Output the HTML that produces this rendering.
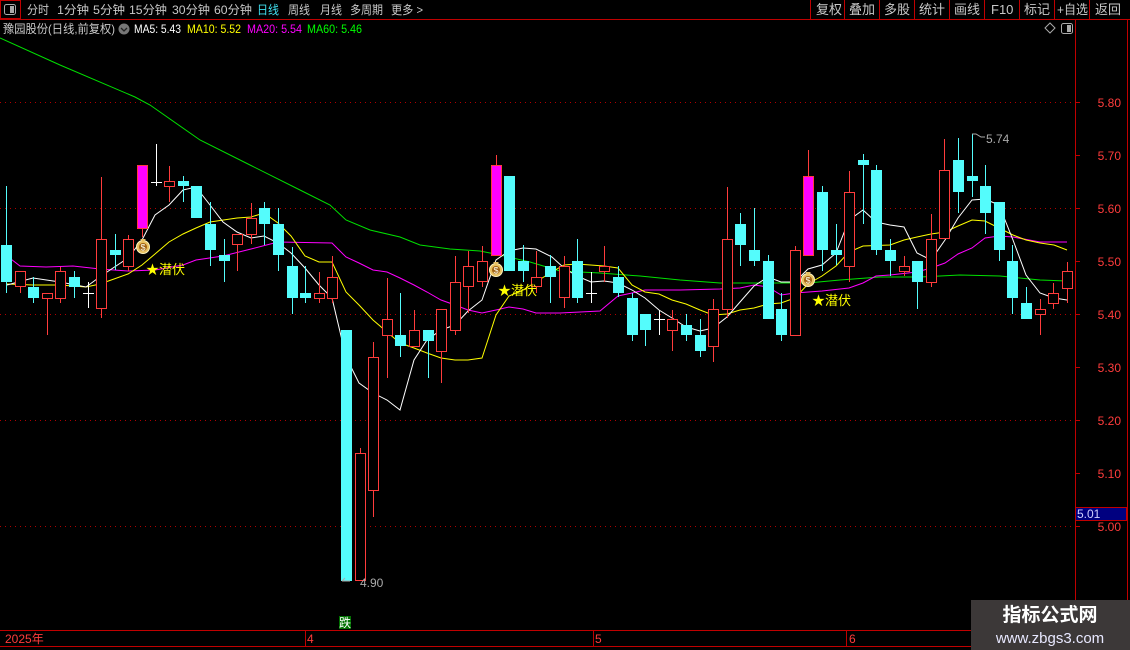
<!DOCTYPE html>
<html><head><meta charset="utf-8"><style>
html,body{margin:0;padding:0;background:#000;width:1130px;height:650px;overflow:hidden}
svg{display:block}
text{font-family:"Liberation Sans","Noto Sans CJK SC",sans-serif}
</style></head><body>
<svg width="1130" height="650" viewBox="0 0 1130 650" xmlns="http://www.w3.org/2000/svg">
<rect width="1130" height="650" fill="#000"/>
<!-- top bar -->
<line x1="0" y1="19.5" x2="1130" y2="19.5" stroke="#c00000"/>
<rect x="0.5" y="0.5" width="20" height="18" fill="none" stroke="#c00000"/>
<rect x="4.5" y="4.5" width="11" height="10" rx="2" fill="none" stroke="#aaa"/>
<rect x="10" y="6" width="4" height="7" fill="#aaa"/>
<g font-size="12" fill="#c8c8c8" lengthAdjust="spacingAndGlyphs">
<text x="27" y="14" textLength="22" lengthAdjust="spacingAndGlyphs">分时</text>
<text x="57" y="14" textLength="32" lengthAdjust="spacingAndGlyphs">1分钟</text>
<text x="93" y="14" textLength="32" lengthAdjust="spacingAndGlyphs">5分钟</text>
<text x="129" y="14" textLength="38" lengthAdjust="spacingAndGlyphs">15分钟</text>
<text x="172" y="14" textLength="38" lengthAdjust="spacingAndGlyphs">30分钟</text>
<text x="214" y="14" textLength="38" lengthAdjust="spacingAndGlyphs">60分钟</text>
<text x="257" y="14" fill="#40e0f0" textLength="22" lengthAdjust="spacingAndGlyphs">日线</text>
<text x="288" y="14" textLength="22" lengthAdjust="spacingAndGlyphs">周线</text>
<text x="320" y="14" textLength="22" lengthAdjust="spacingAndGlyphs">月线</text>
<text x="350" y="14" textLength="33" lengthAdjust="spacingAndGlyphs">多周期</text>
<text x="391" y="14" textLength="32" lengthAdjust="spacingAndGlyphs">更多 &gt;</text>
</g>
<g stroke="#c00000">
<line x1="810.5" y1="0" x2="810.5" y2="19"/><line x1="844.5" y1="0" x2="844.5" y2="19"/><line x1="879.5" y1="0" x2="879.5" y2="19"/>
<line x1="914.5" y1="0" x2="914.5" y2="19"/><line x1="949.5" y1="0" x2="949.5" y2="19"/><line x1="984.5" y1="0" x2="984.5" y2="19"/>
<line x1="1019.5" y1="0" x2="1019.5" y2="19"/><line x1="1054.5" y1="0" x2="1054.5" y2="19"/><line x1="1089.5" y1="0" x2="1089.5" y2="19"/>
</g>
<g font-size="13" fill="#c8c8c8">
<text x="816" y="14">复权</text><text x="849" y="14">叠加</text><text x="884" y="14">多股</text><text x="919" y="14">统计</text>
<text x="954" y="14">画线</text><text x="991" y="14">F10</text><text x="1024" y="14">标记</text><text x="1057" y="14" textLength="31" lengthAdjust="spacingAndGlyphs">+自选</text><text x="1095" y="14">返回</text>
</g>
<!-- info line -->
<g font-size="12">
<text x="3" y="33" fill="#c8c8c8" textLength="112" lengthAdjust="spacingAndGlyphs">豫园股份(日线,前复权)</text>
<circle cx="124" cy="29" r="5.5" fill="#777"/><path d="M121 28l3 3 3-3" stroke="#222" fill="none" stroke-width="1.3"/>
<text x="134" y="33" fill="#fff" textLength="47" lengthAdjust="spacingAndGlyphs">MA5: 5.43</text>
<text x="187" y="33" fill="#ffff00" textLength="54" lengthAdjust="spacingAndGlyphs">MA10: 5.52</text>
<text x="247" y="33" fill="#ff00ff" textLength="55" lengthAdjust="spacingAndGlyphs">MA20: 5.54</text>
<text x="307" y="33" fill="#00ff00" textLength="55" lengthAdjust="spacingAndGlyphs">MA60: 5.46</text>
</g>
<path d="M1045 28l5-5 5 5-5 5z" fill="none" stroke="#aaa"/>
<rect x="1061.5" y="23.5" width="11" height="10" rx="2" fill="none" stroke="#aaa"/><rect x="1067" y="25" width="4" height="7" fill="#aaa"/>
<!-- grid -->
<g stroke="#b00000" stroke-dasharray="1,4">
<line x1="0" y1="102.5" x2="1075" y2="102.5"/><line x1="0" y1="208.5" x2="1075" y2="208.5"/><line x1="0" y1="314.5" x2="1075" y2="314.5"/>
<line x1="0" y1="420.5" x2="1075" y2="420.5"/><line x1="0" y1="526.5" x2="1075" y2="526.5"/>
</g>
<!-- axis -->
<line x1="1075.5" y1="20" x2="1075.5" y2="630" stroke="#c00000"/>
<line x1="1127.5" y1="20" x2="1127.5" y2="650" stroke="#c00000"/>
<g stroke="#c00000">
<line x1="1075" y1="102.5" x2="1080" y2="102.5"/><line x1="1075" y1="155.5" x2="1080" y2="155.5"/><line x1="1075" y1="208.5" x2="1080" y2="208.5"/>
<line x1="1075" y1="261.5" x2="1080" y2="261.5"/><line x1="1075" y1="314.5" x2="1080" y2="314.5"/><line x1="1075" y1="367.5" x2="1080" y2="367.5"/>
<line x1="1075" y1="420.5" x2="1080" y2="420.5"/><line x1="1075" y1="473.5" x2="1080" y2="473.5"/><line x1="1075" y1="526.5" x2="1080" y2="526.5"/>
</g>
<g font-size="12" fill="#ff3c3c" text-anchor="end">
<text x="1121" y="107">5.80</text><text x="1121" y="160">5.70</text><text x="1121" y="213">5.60</text><text x="1121" y="266">5.50</text>
<text x="1121" y="319">5.40</text><text x="1121" y="372">5.30</text><text x="1121" y="425">5.20</text><text x="1121" y="478">5.10</text><text x="1121" y="531">5.00</text>
</g>
<rect x="1075.5" y="507.5" width="51" height="13" fill="#000080" stroke="#c00000"/>
<text x="1077" y="518" font-size="12" fill="#d0d0ff">5.01</text>
<!-- MA lines -->
<polyline fill="none" stroke="#00e000" points="0,38 60,65 135,97 150,105 200,140 250,165 300,190 330,205 346,220 370,230 400,237 420,245 450,249 480,251 500,255 530,262 560,271 600,273 640,276 680,280 720,283 760,283 808,283 840,280 880,277 920,277 960,275 1000,276 1040,280 1067,281"/>
<polyline fill="none" stroke="#ff00ff" points="7,256 20,266 46,267 73,266 100,269 128,271 155,270 183,265 196,260 223,256 251,249 278,242 332,243 346,257 359,263 373,270 387,272 400,278 414,285 427,292 441,300 455,305 468,310 482,313 496,310 509,307 523,309 536,313 560,313 600,311 618,296 632,293 645,290 680,290 720,289 740,288 754,285 768,287 781,295 795,293 822,291 849,288 863,283 876,276 890,275 917,272 931,268 945,263 958,254 972,248 985,238 999,236 1013,237 1040,242 1067,242"/>
<polyline fill="none" stroke="#ffff00" points="7,284 33,285 60,285 86,287 100,284 114,279 128,274 142,265 155,254 169,242 183,234 196,228 210,222 237,218 251,217 264,213 278,223 291,236 305,256 319,262 332,262 346,292 359,305 373,320 387,332 400,343 414,348 427,353 441,358 455,360 468,360 482,358 496,315 509,296 523,290 536,282 550,273 564,265 577,264 604,266 618,268 632,285 645,292 659,294 672,300 686,304 700,310 713,315 727,314 740,310 754,308 768,304 781,303 795,298 808,284 822,276 836,266 849,252 863,246 890,245 904,240 917,237 931,234 945,232 958,226 972,220 985,221 999,228 1013,235 1026,240 1040,243 1054,245 1067,250"/>
<polyline fill="none" stroke="#ffffff" points="7,285 33,278 60,282 86,287 101,276 128,258 142,240 155,215 169,205 183,190 196,187 210,205 223,222 237,232 251,238 264,236 278,243 291,253 305,268 319,285 332,298 346,357 359,383 373,393 387,400 400,410 414,360 427,340 441,330 455,325 468,311 482,300 496,260 509,251 523,248 536,249 552,257 564,268 577,276 591,282 604,281 618,283 632,290 645,298 659,310 672,318 686,327 700,331 713,328 727,317 740,302 754,286 768,277 781,282 795,282 808,269 822,265 836,253 849,220 863,210 876,222 890,225 904,227 917,253 931,260 945,240 958,218 972,200 985,199 999,205 1013,240 1026,275 1040,293 1054,298 1067,300"/>
<!-- down candles -->
<g fill="#54fcfc" stroke="#54fcfc">
<line x1="6.5" y1="186" x2="6.5" y2="293"/><rect x="1.5" y="245.5" width="10" height="36"/>
<line x1="33.5" y1="277" x2="33.5" y2="303"/><rect x="28.5" y="287.5" width="10" height="10"/>
<line x1="74.5" y1="271" x2="74.5" y2="298"/><rect x="69.5" y="277.5" width="10" height="9"/>
<line x1="115.5" y1="234" x2="115.5" y2="270"/><rect x="110.5" y="250.5" width="10" height="4"/>
<line x1="183.5" y1="176" x2="183.5" y2="202"/><rect x="178.5" y="181.5" width="10" height="4"/>
<rect x="191.5" y="186.5" width="10" height="31"/>
<line x1="210.5" y1="202" x2="210.5" y2="266"/><rect x="205.5" y="224.5" width="10" height="25"/>
<line x1="224.5" y1="239" x2="224.5" y2="282"/><rect x="219.5" y="255.5" width="10" height="5"/>
<line x1="264.5" y1="202" x2="264.5" y2="245"/><rect x="259.5" y="208.5" width="10" height="15"/>
<line x1="278.5" y1="208" x2="278.5" y2="271"/><rect x="273.5" y="224.5" width="10" height="30"/>
<line x1="292.5" y1="247" x2="292.5" y2="314"/><rect x="287.5" y="266.5" width="10" height="31"/>
<line x1="305.5" y1="266" x2="305.5" y2="303"/><rect x="300.5" y="293.5" width="10" height="4"/>
<rect x="341.5" y="330.5" width="10" height="250"/>
<line x1="400.5" y1="293" x2="400.5" y2="357"/><rect x="395.5" y="335.5" width="10" height="10"/>
<line x1="428.5" y1="330" x2="428.5" y2="378"/><rect x="423.5" y="330.5" width="10" height="10"/>
<rect x="504.5" y="176.5" width="10" height="94"/>
<line x1="523.5" y1="245" x2="523.5" y2="282"/><rect x="518.5" y="261.5" width="10" height="9"/>
<line x1="550.5" y1="255" x2="550.5" y2="303"/><rect x="545.5" y="266.5" width="10" height="10"/>
<line x1="577.5" y1="239" x2="577.5" y2="303"/><rect x="572.5" y="261.5" width="10" height="36"/>
<line x1="618.5" y1="266" x2="618.5" y2="297"/><rect x="613.5" y="277.5" width="10" height="15"/>
<line x1="632.5" y1="293" x2="632.5" y2="341"/><rect x="627.5" y="298.5" width="10" height="36"/>
<line x1="645.5" y1="314" x2="645.5" y2="346"/><rect x="640.5" y="314.5" width="10" height="15"/>
<line x1="686.5" y1="314" x2="686.5" y2="341"/><rect x="681.5" y="325.5" width="10" height="9"/>
<line x1="700.5" y1="319" x2="700.5" y2="357"/><rect x="695.5" y="335.5" width="10" height="15"/>
<line x1="740.5" y1="213" x2="740.5" y2="266"/><rect x="735.5" y="224.5" width="10" height="20"/>
<line x1="754.5" y1="208" x2="754.5" y2="266"/><rect x="749.5" y="250.5" width="10" height="10"/>
<line x1="768.5" y1="255" x2="768.5" y2="319"/><rect x="763.5" y="261.5" width="10" height="57"/>
<line x1="781.5" y1="293" x2="781.5" y2="341"/><rect x="776.5" y="309.5" width="10" height="25"/>
<line x1="822.5" y1="186" x2="822.5" y2="271"/><rect x="817.5" y="192.5" width="10" height="57"/>
<line x1="836.5" y1="224" x2="836.5" y2="265"/><rect x="831.5" y="250.5" width="10" height="4"/>
<line x1="863.5" y1="154" x2="863.5" y2="224"/><rect x="858.5" y="160.5" width="10" height="4"/>
<line x1="876.5" y1="165" x2="876.5" y2="255"/><rect x="871.5" y="170.5" width="10" height="79"/>
<line x1="890.5" y1="239" x2="890.5" y2="276"/><rect x="885.5" y="250.5" width="10" height="10"/>
<line x1="917.5" y1="261" x2="917.5" y2="309"/><rect x="912.5" y="261.5" width="10" height="20"/>
<line x1="958.5" y1="138" x2="958.5" y2="213"/><rect x="953.5" y="160.5" width="10" height="31"/>
<line x1="972.5" y1="134" x2="972.5" y2="197"/><rect x="967.5" y="176.5" width="10" height="4"/>
<line x1="985.5" y1="165" x2="985.5" y2="234"/><rect x="980.5" y="186.5" width="10" height="26"/>
<line x1="999.5" y1="202" x2="999.5" y2="261"/><rect x="994.5" y="202.5" width="10" height="47"/>
<line x1="1012.5" y1="245" x2="1012.5" y2="314"/><rect x="1007.5" y="261.5" width="10" height="36"/>
<line x1="1026.5" y1="287" x2="1026.5" y2="319"/><rect x="1021.5" y="303.5" width="10" height="15"/>
</g>
<!-- up candles -->
<g fill="#000" stroke="#ff3c3c">
<line x1="20.5" y1="271" x2="20.5" y2="293"/><rect x="15.5" y="271.5" width="10" height="15"/>
<line x1="47.5" y1="293" x2="47.5" y2="335"/><rect x="42.5" y="293.5" width="10" height="5"/>
<line x1="60.5" y1="267" x2="60.5" y2="303"/><rect x="55.5" y="271.5" width="10" height="27"/>
<line x1="101.5" y1="177" x2="101.5" y2="318"/><rect x="96.5" y="239.5" width="10" height="69"/>
<line x1="128.5" y1="235" x2="128.5" y2="271"/><rect x="123.5" y="239.5" width="10" height="27"/>
<line x1="169.5" y1="166" x2="169.5" y2="202"/><rect x="164.5" y="181.5" width="10" height="5"/>
<line x1="237.5" y1="234" x2="237.5" y2="271"/><rect x="232.5" y="234.5" width="10" height="10"/>
<line x1="251.5" y1="203" x2="251.5" y2="244"/><rect x="246.5" y="218.5" width="10" height="16"/>
<line x1="319.5" y1="272" x2="319.5" y2="303"/><rect x="314.5" y="293.5" width="10" height="5"/>
<line x1="332.5" y1="256" x2="332.5" y2="303"/><rect x="327.5" y="277.5" width="10" height="21"/>
<line x1="360.5" y1="448" x2="360.5" y2="581"/><rect x="355.5" y="453.5" width="10" height="127"/>
<line x1="373.5" y1="342" x2="373.5" y2="517"/><rect x="368.5" y="357.5" width="10" height="133"/>
<line x1="387.5" y1="278" x2="387.5" y2="378"/><rect x="382.5" y="319.5" width="10" height="16"/>
<line x1="414.5" y1="310" x2="414.5" y2="347"/><rect x="409.5" y="330.5" width="10" height="16"/>
<line x1="441.5" y1="309" x2="441.5" y2="383"/><rect x="436.5" y="309.5" width="10" height="42"/>
<line x1="455.5" y1="256" x2="455.5" y2="335"/><rect x="450.5" y="282.5" width="10" height="48"/>
<line x1="468.5" y1="251" x2="468.5" y2="313"/><rect x="463.5" y="266.5" width="10" height="20"/>
<line x1="482.5" y1="246" x2="482.5" y2="287"/><rect x="477.5" y="261.5" width="10" height="20"/>
<line x1="536.5" y1="251" x2="536.5" y2="293"/><rect x="531.5" y="277.5" width="10" height="9"/>
<line x1="564.5" y1="256" x2="564.5" y2="308"/><rect x="559.5" y="266.5" width="10" height="31"/>
<line x1="604.5" y1="246" x2="604.5" y2="282"/><rect x="599.5" y="266.5" width="10" height="5"/>
<line x1="672.5" y1="310" x2="672.5" y2="351"/><rect x="667.5" y="319.5" width="10" height="11"/>
<line x1="713.5" y1="299" x2="713.5" y2="362"/><rect x="708.5" y="309.5" width="10" height="37"/>
<line x1="727.5" y1="187" x2="727.5" y2="318"/><rect x="722.5" y="239.5" width="10" height="70"/>
<line x1="795.5" y1="246" x2="795.5" y2="336"/><rect x="790.5" y="250.5" width="10" height="85"/>
<line x1="849.5" y1="171" x2="849.5" y2="282"/><rect x="844.5" y="192.5" width="10" height="74"/>
<line x1="904.5" y1="256" x2="904.5" y2="276"/><rect x="899.5" y="266.5" width="10" height="5"/>
<line x1="931.5" y1="214" x2="931.5" y2="287"/><rect x="926.5" y="239.5" width="10" height="43"/>
<line x1="944.5" y1="139" x2="944.5" y2="239"/><rect x="939.5" y="170.5" width="10" height="68"/>
<line x1="1040.5" y1="299" x2="1040.5" y2="335"/><rect x="1035.5" y="309.5" width="10" height="5"/>
<line x1="1053.5" y1="283" x2="1053.5" y2="309"/><rect x="1048.5" y="293.5" width="10" height="10"/>
<line x1="1067.5" y1="262" x2="1067.5" y2="303"/><rect x="1062.5" y="271.5" width="10" height="17"/>
</g>
<!-- magenta -->
<g fill="#ff00ff" stroke="#ff3c3c">
<rect x="137.5" y="165.5" width="10" height="63"/><line x1="142.5" y1="229" x2="142.5" y2="237"/>
<line x1="496.5" y1="155" x2="496.5" y2="165"/><rect x="491.5" y="165.5" width="10" height="90"/>
<line x1="808.5" y1="150" x2="808.5" y2="176"/><rect x="803.5" y="176.5" width="10" height="79"/>
</g>
<!-- crosses -->
<g stroke="#fff">
<line x1="88.5" y1="282" x2="88.5" y2="308"/><line x1="83" y1="293.5" x2="94" y2="293.5"/>
<line x1="156.5" y1="144" x2="156.5" y2="186"/><line x1="151" y1="182.5" x2="162" y2="182.5"/>
<line x1="591.5" y1="272" x2="591.5" y2="303"/><line x1="586" y1="293.5" x2="597" y2="293.5"/>
<line x1="659.5" y1="310" x2="659.5" y2="335"/><line x1="654" y1="319.5" x2="665" y2="319.5"/>
</g>
<!-- money bags -->
<g>
<g transform="translate(143,247)"><circle r="6.5" fill="#e8c060" stroke="#fff4c0"/><path d="M-3,-8h6l-2,2h-2z" fill="#e8c060"/><circle r="4" fill="#a06010"/><text y="3.5" font-size="9" fill="#ffe" text-anchor="middle">$</text></g>
<g transform="translate(496,270)"><circle r="6.5" fill="#e8c060" stroke="#fff4c0"/><path d="M-3,-8h6l-2,2h-2z" fill="#e8c060"/><circle r="4" fill="#a06010"/><text y="3.5" font-size="9" fill="#ffe" text-anchor="middle">$</text></g>
<g transform="translate(808,280)"><circle r="6.5" fill="#e8c060" stroke="#fff4c0"/><path d="M-3,-8h6l-2,2h-2z" fill="#e8c060"/><circle r="4" fill="#a06010"/><text y="3.5" font-size="9" fill="#ffe" text-anchor="middle">$</text></g>
</g>
<g font-size="13" fill="#ffff00">
<text x="146" y="274">★潜伏</text>
<text x="498" y="295">★潜伏</text>
<text x="812" y="305">★潜伏</text>
</g>
<!-- labels -->
<path d="M342 581h8M342 581l3-3" stroke="#aaa" fill="none"/>
<text x="360" y="587" font-size="12" fill="#aaa">4.90</text>
<path d="M972 134h4l5 3h4" stroke="#aaa" fill="none"/>
<text x="986" y="143" font-size="12" fill="#aaa">5.74</text>
<rect x="339" y="616" width="12" height="13" fill="#007000"/>
<text x="339" y="627" font-size="12" fill="#fff">跌</text>
<!-- date axis -->
<line x1="0" y1="630.5" x2="1130" y2="630.5" stroke="#c00000"/>
<line x1="0" y1="646.5" x2="1130" y2="646.5" stroke="#c00000"/>
<line x1="305.5" y1="630" x2="305.5" y2="646" stroke="#c00000"/>
<line x1="593.5" y1="630" x2="593.5" y2="646" stroke="#c00000"/>
<line x1="846.5" y1="630" x2="846.5" y2="646" stroke="#c00000"/>
<g font-size="12" fill="#ff3c3c">
<text x="5" y="643">2025年</text><text x="307" y="643">4</text><text x="595" y="643">5</text><text x="849" y="643">6</text>
</g>
<!-- watermark -->
<rect x="971" y="600" width="159" height="50" fill="#3c3838"/>
<text x="1050" y="621" font-size="19" font-weight="bold" fill="#fff" text-anchor="middle">指标公式网</text>
<text x="1050" y="643" font-size="15" fill="#e8e8ff" text-anchor="middle">www.zbgs3.com</text>
</svg>
</body></html>
